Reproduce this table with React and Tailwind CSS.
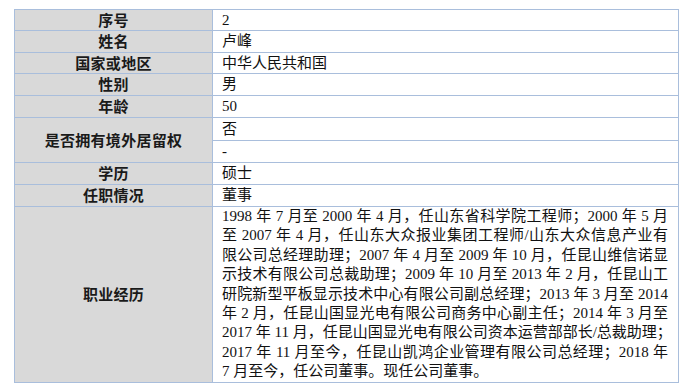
const rows = [
  { label: "序号", value: "2", h: "h-[21px]" },
  { label: "姓名", value: "卢峰", h: "h-[21.5px]" },
  { label: "国家或地区", value: "中华人民共和国", h: "h-[21.5px]" },
  { label: "性别", value: "男", h: "h-[21.5px]" },
  { label: "年龄", value: "50", h: "h-[22px]" },
];

const career = [
  "1998 年 7 月至 2000 年 4 月，任山东省科学院工程师；2000 年 5 月",
  "至 2007 年 4 月，任山东大众报业集团工程师/山东大众信息产业有",
  "限公司总经理助理；2007 年 4 月至 2009 年 10 月，任昆山维信诺显",
  "示技术有限公司总裁助理；2009 年 10 月至 2013 年 2 月，任昆山工",
  "研院新型平板显示技术中心有限公司副总经理；2013 年 3 月至 2014",
  "年 2 月，任昆山国显光电有限公司商务中心副主任；2014 年 3 月至",
  "2017 年 11 月，任昆山国显光电有限公司资本运营部部长/总裁助理；",
  "2017 年 11 月至今，任昆山凯鸿企业管理有限公司总经理；2018 年",
  "7 月至今，任公司董事。现任公司董事。",
];

const labelCls =
  "bg-[#d9d9d9] border border-[#a9bedc] text-center font-bold text-[15px] leading-[18px] text-[#1a1a1a] tracking-[0.3px] [font-family:'Noto_Sans_CJK_SC',sans-serif] p-0";
const valueCls =
  "border border-[#a9bedc] text-left text-[15px] leading-[18px] text-[#111] pl-[9px] pr-[10px] py-0 [font-family:'Liberation_Serif','Noto_Sans_CJK_SC',serif]";

export default function App() {
  return (
    <div className="w-[700px] h-[392px] bg-white pt-[9px] pl-[14px]">
      <table className="border-collapse w-[665px] table-fixed">
        <colgroup>
          <col className="w-[198px]" />
          <col />
        </colgroup>
        <tbody>
          {rows.map((r) => (
            <tr key={r.label} className={r.h}>
              <td className={labelCls}>{r.label}</td>
              <td className={valueCls}>{r.value}</td>
            </tr>
          ))}
          <tr className="h-[23px]">
            <td rowSpan={2} className={labelCls}>
              是否拥有境外居留权
            </td>
            <td className={valueCls}>否</td>
          </tr>
          <tr className="h-[22.5px]">
            <td className={valueCls}>-</td>
          </tr>
          <tr className="h-[21.5px]">
            <td className={labelCls}>学历</td>
            <td className={valueCls}>硕士</td>
          </tr>
          <tr className="h-[22px]">
            <td className={labelCls}>任职情况</td>
            <td className={valueCls}>董事</td>
          </tr>
          <tr className="h-[176.5px]">
            <td className={labelCls}>职业经历</td>
            <td className={valueCls}>
              {career.map((line, i) => (
                <div
                  key={i}
                  className={
                    "h-[19.4px] leading-[19.4px] whitespace-nowrap overflow-visible " +
                    (i < career.length - 1
                      ? "text-justify [text-align-last:justify]"
                      : "")
                  }
                >
                  {line}
                </div>
              ))}
            </td>
          </tr>
        </tbody>
      </table>
    </div>
  );
}
